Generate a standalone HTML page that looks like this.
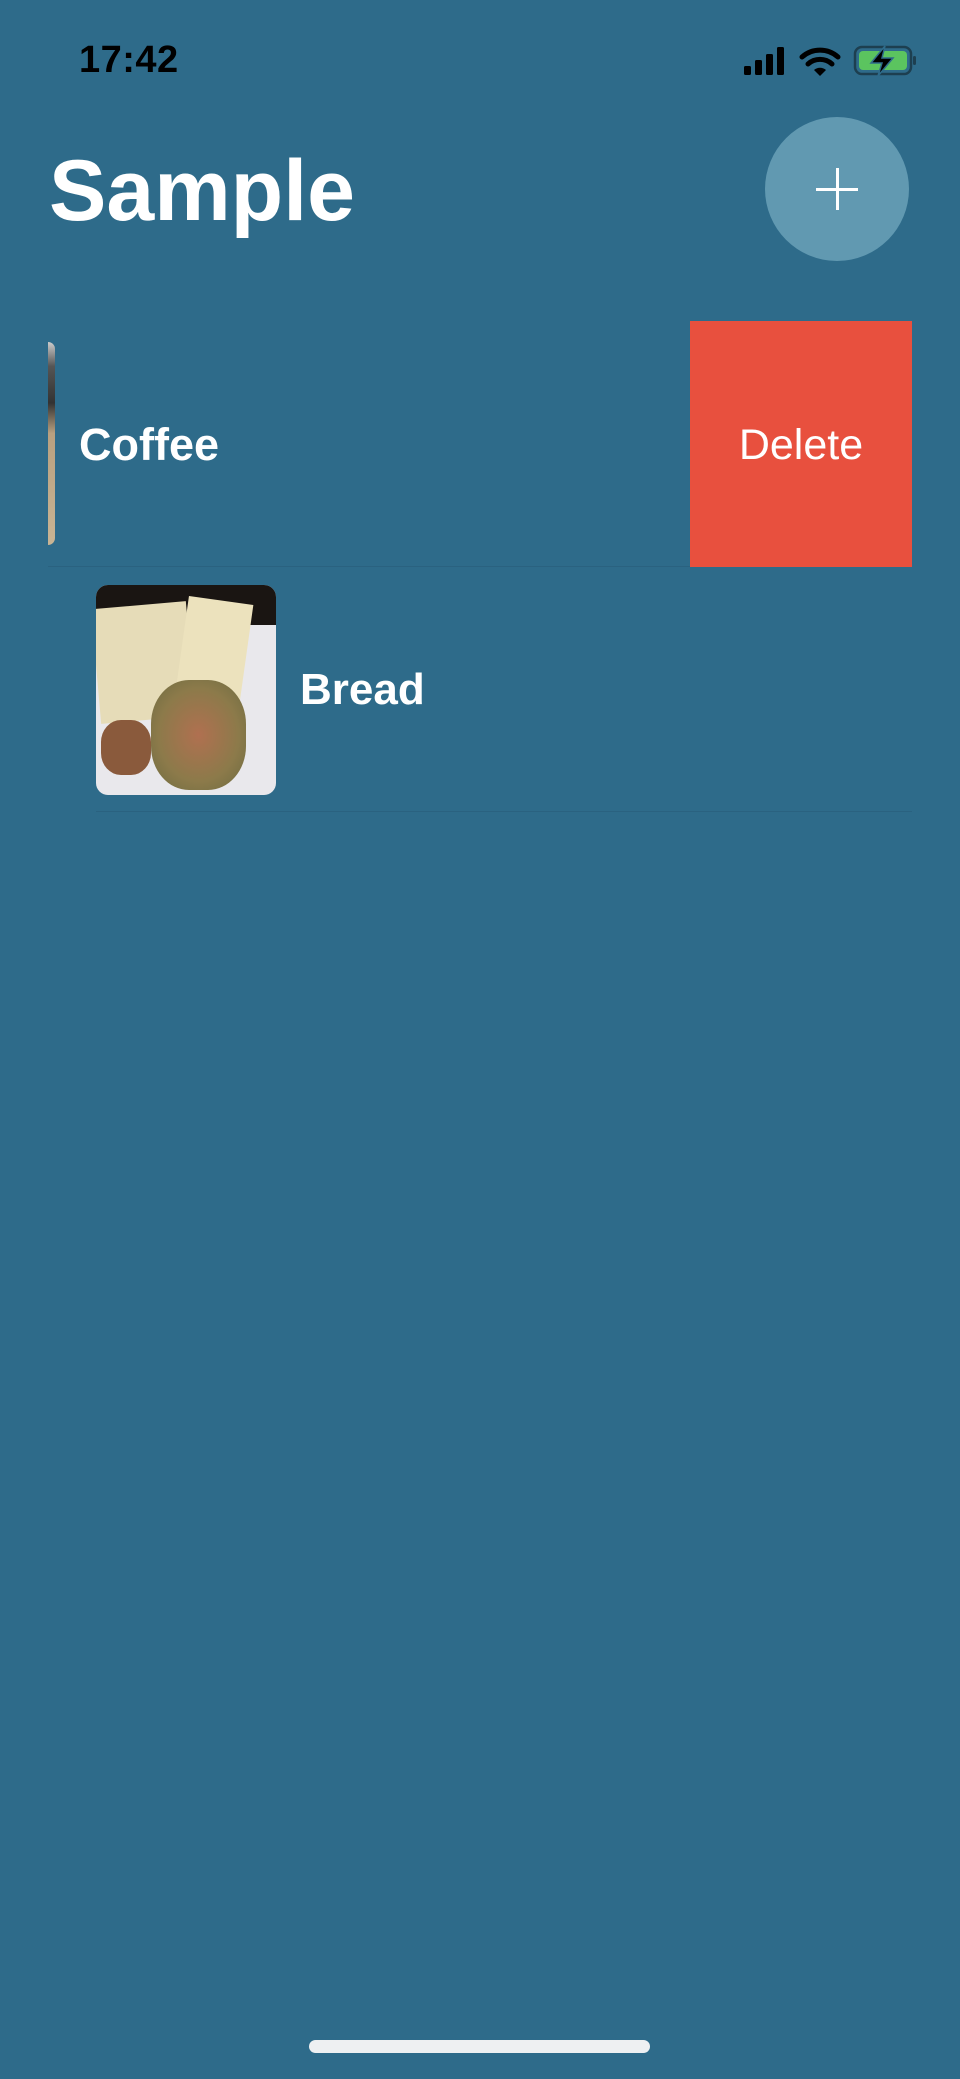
<!DOCTYPE html>
<html><head><meta charset="utf-8"><style>
html,body{margin:0;padding:0}
body{width:960px;height:2079px;background:#2e6b8a;position:relative;overflow:hidden;font-family:"Liberation Sans",sans-serif;color:#fff}
.abs{position:absolute}
</style></head><body>
<div class="abs" style="left:79px;top:39px;font-size:38px;font-weight:bold;color:#000;letter-spacing:0.5px">17:42</div>
<svg class="abs" style="left:742px;top:44px" width="175" height="34" viewBox="0 0 175 34">
 <rect x="2" y="22" width="7" height="9" rx="1.5" fill="#000"/>
 <rect x="13" y="16" width="7" height="15" rx="1.5" fill="#000"/>
 <rect x="24" y="10" width="7" height="21" rx="1.5" fill="#000"/>
 <rect x="35" y="3" width="7" height="28" rx="1.5" fill="#000"/>
 <path d="M60 13 A27 27 0 0 1 96 13" stroke="#000" stroke-width="5" fill="none" stroke-linecap="round"/>
 <path d="M66 20 A18 18 0 0 1 90 20" stroke="#000" stroke-width="5" fill="none" stroke-linecap="round"/>
 <path d="M72 26 L78 32 L84 26 A9 9 0 0 0 72 26Z" fill="#000"/>
 <rect x="113" y="3" width="56" height="27" rx="7" fill="none" stroke="#1d3f50" stroke-width="2.5"/>
 <rect x="117" y="7" width="48" height="19" rx="4" fill="#5bc45f"/>
 <rect x="171" y="12" width="3" height="9" rx="1.5" fill="#1d3f50"/>
 <path d="M143 2 L129 19 L140 19 L136 32 L151 14 L140 14 Z" fill="#000" stroke="#2e6b8a" stroke-width="1.5"/>
</svg>
<div class="abs" style="left:49px;top:136px;font-size:86px;font-weight:bold;line-height:110px">Sample</div>
<div class="abs" style="left:765px;top:117px;width:144px;height:144px;border-radius:50%;background:#6199b1"></div>
<div class="abs" style="left:816px;top:188px;width:42px;height:3px;background:#fff"></div>
<div class="abs" style="left:836px;top:168px;width:3px;height:42px;background:#fff"></div>

<div class="abs" style="left:48px;top:342px;width:7px;height:203px;border-radius:0 8px 8px 0;background:linear-gradient(#ccc 0%,#555 12%,#333 30%,#b8a080 45%,#c8b494 100%)"></div>
<div class="abs" style="left:79px;top:420px;font-size:45px;font-weight:bold;line-height:50px">Coffee</div>
<div class="abs" style="left:690px;top:321px;width:222px;height:246px;background:#e8503e"></div>
<div class="abs" style="left:690px;top:420px;width:222px;text-align:center;font-size:43px;line-height:50px">Delete</div>
<div class="abs" style="left:48px;top:566px;width:642px;height:1px;background:#2a6280"></div>

<div class="abs" style="left:96px;top:585px;width:180px;height:210px;border-radius:12px;overflow:hidden;background:#e9e8ec">
 <div class="abs" style="left:0;top:0;width:180px;height:40px;background:#1a1512"></div>
 <div class="abs" style="left:0;top:20px;width:95px;height:115px;background:#e6dcb8;transform:rotate(-5deg)"></div>
 <div class="abs" style="left:85px;top:15px;width:65px;height:110px;background:#ece2bd;transform:rotate(8deg)"></div>
 <div class="abs" style="left:55px;top:95px;width:95px;height:110px;border-radius:40%;background:radial-gradient(#b07050,#8c7a4a 60%,#6b6a40)"></div>
 <div class="abs" style="left:5px;top:135px;width:50px;height:55px;border-radius:40%;background:#8a5a3c"></div>
</div>
<div class="abs" style="left:300px;top:665px;font-size:44px;font-weight:bold;line-height:50px">Bread</div>
<div class="abs" style="left:96px;top:811px;width:816px;height:1px;background:#2a6280"></div>

<div class="abs" style="left:309px;top:2040px;width:341px;height:13px;border-radius:7px;background:#eef0f2"></div>
</body></html>
